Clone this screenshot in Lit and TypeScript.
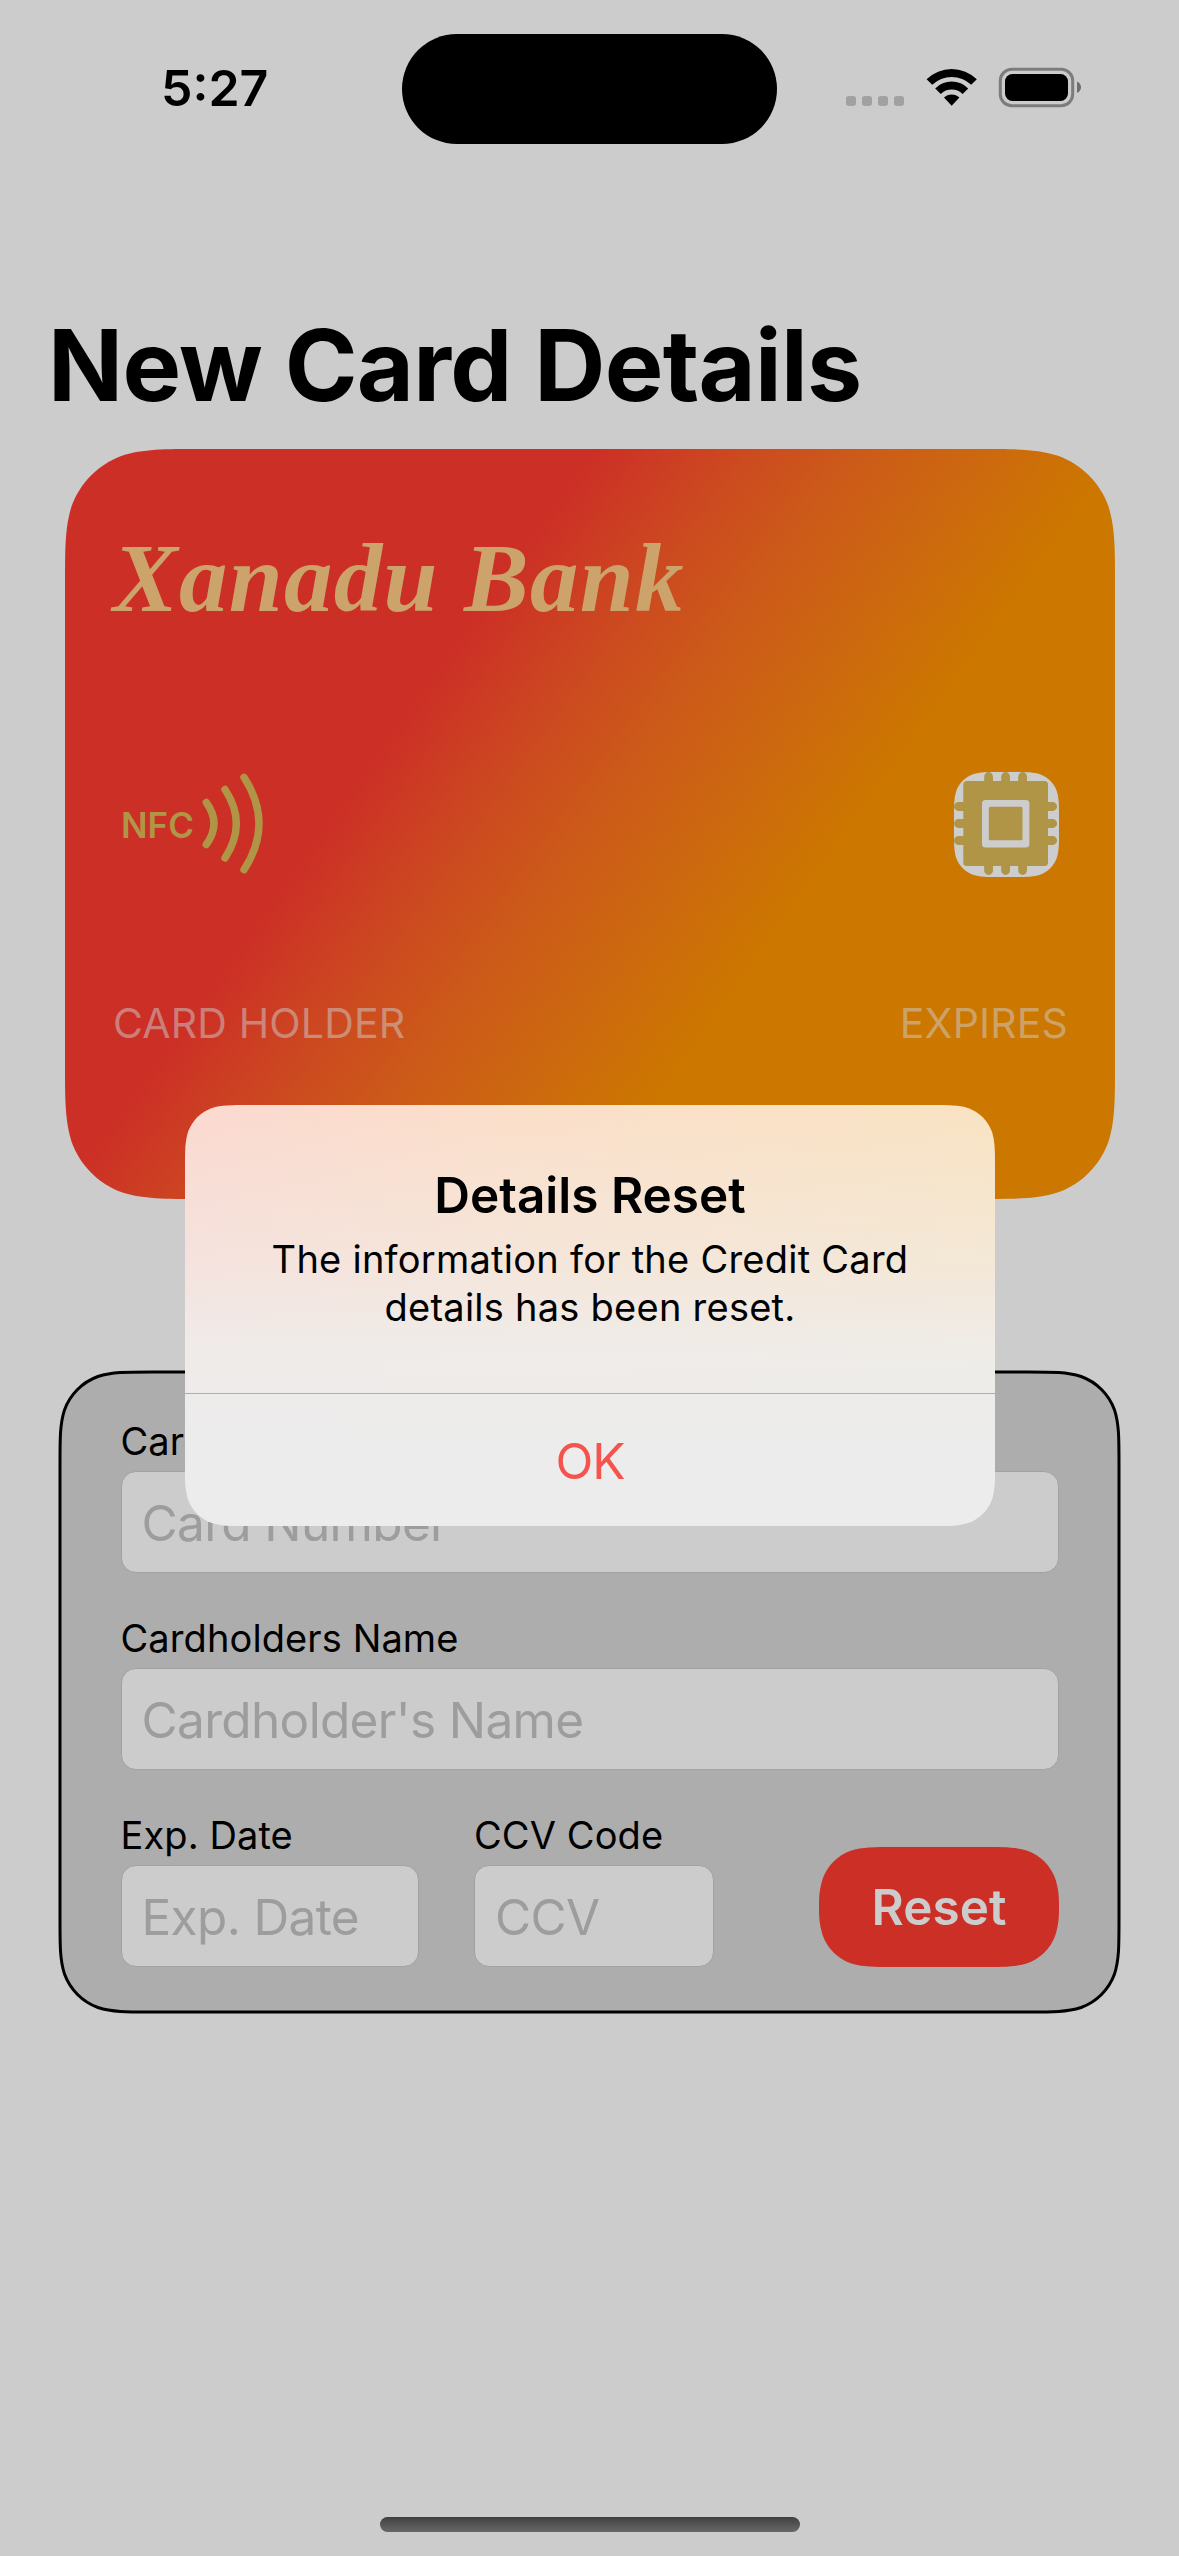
import { LitElement, html, svg, css, unsafeCSS } from "lit";
import { customElement, property } from "lit/decorators.js";

/** Outline of a rectangle with continuous-curvature corners. */
function squircle(w: number, h: number, r: number, o = 0): string {
  const a = 1.528665, b = 1.088493, c = 0.868407, d = 0.631494, e = 0.074911, f = 0.372824, g = 0.16906;
  const ay = Math.min(a, h / 2 / r);
  const by = Math.min(b, (ay + c) / 2);
  const X = (k: number) => (o + k * r).toFixed(2);
  const XR = (k: number) => (o + w - k * r).toFixed(2);
  const Y = (k: number) => (o + k * r).toFixed(2);
  const YB = (k: number) => (o + h - k * r).toFixed(2);
  return [
    `M${X(a)} ${Y(0)}L${XR(a)} ${Y(0)}`,
    `C${XR(b)} ${Y(0)} ${XR(c)} ${Y(0)} ${XR(d)} ${Y(e)}`,
    `C${XR(f)} ${Y(g)} ${XR(g)} ${Y(f)} ${XR(e)} ${Y(d)}`,
    `C${XR(0)} ${Y(c)} ${XR(0)} ${Y(by)} ${XR(0)} ${Y(ay)}`,
    `L${XR(0)} ${YB(ay)}`,
    `C${XR(0)} ${YB(by)} ${XR(0)} ${YB(c)} ${XR(e)} ${YB(d)}`,
    `C${XR(g)} ${YB(f)} ${XR(f)} ${YB(g)} ${XR(d)} ${YB(e)}`,
    `C${XR(c)} ${YB(0)} ${XR(b)} ${YB(0)} ${XR(a)} ${YB(0)}`,
    `L${X(a)} ${YB(0)}`,
    `C${X(b)} ${YB(0)} ${X(c)} ${YB(0)} ${X(d)} ${YB(e)}`,
    `C${X(f)} ${YB(g)} ${X(g)} ${YB(f)} ${X(e)} ${YB(d)}`,
    `C${X(0)} ${YB(c)} ${X(0)} ${YB(by)} ${X(0)} ${YB(ay)}`,
    `L${X(0)} ${Y(ay)}`,
    `C${X(0)} ${Y(by)} ${X(0)} ${Y(c)} ${X(e)} ${Y(d)}`,
    `C${X(g)} ${Y(f)} ${X(f)} ${Y(g)} ${X(d)} ${Y(e)}`,
    `C${X(c)} ${Y(0)} ${X(b)} ${Y(0)} ${X(a)} ${Y(0)}Z`,
  ].join("");
}

const clip = (w: number, h: number, r: number) => unsafeCSS(`path("${squircle(w, h, r)}")`);

@customElement("status-bar")
class StatusBar extends LitElement {
  static styles = css`
    :host { display: grid; grid-template-columns: 402px 375px 402px; height: 271px; padding-top: 34px; box-sizing: border-box; align-items: start; }
    .time { padding-left: 161px; font-size: 50px; font-weight: 600; line-height: 108px; }
    .island { height: 110px; border-radius: 55px; background: #000; }
    .icons { display: block; margin: 26px 0 0 61px; }
  `;
  render() {
    return html`
      <div class="time">5:27</div>
      <div class="island"></div>
      <svg class="icons" width="260" height="60" viewBox="838 60 260 60">
        ${[846, 862, 878, 894].map((x) => svg`<rect x=${x} y="96" width="10" height="10" rx="3" fill="#a1a1a1" />`)}
        <path d="M926.6 79.2A36 36 0 0 1 976.8 79.2L971.2 84.8A28 28 0 0 0 932.2 84.8Z" />
        <path d="M935.2 88.4A23.4 23.4 0 0 1 968.2 88.4L962.6 94A15.5 15.5 0 0 0 940.8 94Z" />
        <path d="M944 97.6A11 11 0 0 1 959.4 97.6L951.7 105.8Z" />
        <rect x="1000.3" y="69.3" width="72.4" height="36.4" rx="11.5" fill="none" stroke="#7c7c7c" stroke-width="3" />
        <rect x="1005" y="74" width="63" height="27" rx="7.5" />
        <path d="M1077 81.5Q1081 83.5 1081 87.3T1077 93Z" fill="#6e6e6e" />
      </svg>
    `;
  }
}

@customElement("credit-card")
class CreditCard extends LitElement {
  static styles = css`
    :host {
      display: flex; flex-direction: column; box-sizing: border-box; width: 1050px; height: 750px; padding: 70px 47px 0 48px;
      background: linear-gradient(125.54deg, #cc2f26 33.33%, #cc4721 41.67%, #cc5a19 50%, #cc690f 58.33%, #cc7700 66.67%);
      clip-path: ${clip(1050, 750, 90)};
    }
    .bank { font: italic 700 97px/120px "Liberation Serif", serif; letter-spacing: 1.25px; color: #cba36b; white-space: nowrap; }
    .row { display: flex; justify-content: space-between; align-items: center; }
    .icons { margin: 133px 9px 0 8px; height: 105px; }
    .nfc { display: flex; align-items: center; color: #b09546; font-size: 35px; font-weight: 600; }
    .waves { margin-left: 8px; }
    .chip { display: block; }
    .labels { margin-top: 116px; font-size: 41px; line-height: 60px; letter-spacing: 0.15px; color: rgba(205, 205, 205, 0.5); }
  `;
  render() {
    return html`
      <div class="bank">Xanadu Bank</div>
      <div class="row icons">
        <div class="nfc">
          <span>NFC</span>
          <svg class="waves" width="64" height="105" viewBox="202 772 64 105" fill="none" stroke="#b09546" stroke-width="7.4" stroke-linecap="round">
            <path d="M206.3 802.5Q221.7 823.5 206.3 844.5" />
            <path d="M225 789.5Q247.6 823.5 225 858" />
            <path d="M244 777.3Q274 823.5 244 869.7" />
          </svg>
        </div>
        <svg class="chip" width="105" height="105" viewBox="34 32 105 105">
          <path d=${squircle(105, 105, 30)} transform="translate(34 32)" fill="#cdcdcd" />
          <rect x="43.3" y="41" width="84.7" height="85" rx="3.5" fill="#b09546" />
          <path d="M68.6 36.5V130.5M85.6 36.5V130.5M102.6 36.5V130.5M38.4 66.5H132.7M38.4 83.5H132.7M38.4 100.5H132.7" stroke="#b09546" stroke-width="8.8" stroke-linecap="round" />
          <rect x="62" y="60" width="47.4" height="47.4" rx="3.5" fill="#cdcdcd" />
          <rect x="68.8" y="66.8" width="33.7" height="33.5" rx="1.5" fill="#b09546" />
        </svg>
      </div>
      <div class="row labels"><span>CARD HOLDER</span><span>EXPIRES</span></div>
    `;
  }
}

@customElement("form-field")
class FormField extends LitElement {
  @property() label = "";
  @property() placeholder = "";
  static styles = css`
    :host { display: block; }
    .label { font-size: 38px; line-height: 60px; letter-spacing: 0.1px; color: #000; white-space: nowrap; }
    .box { box-sizing: border-box; height: 102px; margin-bottom: -1px; padding: 2px 0 0 20px; border: 1px solid #a2a2a2; border-radius: 15px; background: #ccc; font-size: 49.5px; line-height: 98px; letter-spacing: -0.65px; color: #9d9d9d; white-space: nowrap; }
  `;
  render() {
    return html`<div class="label">${this.label}</div><div class="box">${this.placeholder}</div>`;
  }
}

@customElement("card-form")
class CardForm extends LitElement {
  static styles = css`
    :host { display: grid; box-sizing: border-box; width: 1059px; height: 640px; }
    .frame, .content { grid-area: 1 / 1; }
    .frame { display: block; margin: -2px; }
    .content { display: flex; flex-direction: column; gap: 36px; padding: 39px 60px 0 60.5px; }
    .row { display: flex; align-items: flex-end; }
    .exp { width: 298.5px; margin-right: 55px; }
    .ccv { width: 240px; }
    .reset { width: 240px; height: 120px; margin: 0 0 -1px auto; background: #cc2f26; clip-path: ${clip(240, 120, 50)}; color: #ccc; font-size: 49.5px; font-weight: 600; line-height: 120px; text-align: center; }
  `;
  render() {
    return html`
      <svg class="frame" width="1063" height="644"><path d=${squircle(1059, 640, 60, 2)} fill="#adadad" stroke="#000" stroke-width="3" /></svg>
      <div class="content">
        <form-field label="Card Number" placeholder="Card Number"></form-field>
        <form-field label="Cardholders Name" placeholder="Cardholder's Name"></form-field>
        <div class="row">
          <form-field class="exp" label="Exp. Date" placeholder="Exp. Date"></form-field>
          <form-field class="ccv" label="CCV Code" placeholder="CCV"></form-field>
          <div class="reset">Reset</div>
        </div>
      </div>
    `;
  }
}

@customElement("alert-dialog")
class AlertDialog extends LitElement {
  static styles = css`
    :host {
      display: flex; flex-direction: column; box-sizing: border-box; width: 810px; height: 421px; text-align: center; color: #000;
      background:
        linear-gradient(to bottom, rgba(236, 236, 236, 0) 0%, rgba(238, 237, 236, 0.5) 38%, rgba(238, 237, 236, 0.9) 58%, #ececec 82%),
        linear-gradient(to right, #fbd9d0, #fbdfc9 42%, #f9e3c2);
      clip-path: ${clip(810, 421, 42)};
    }
    .body { height: 289px; box-sizing: border-box; padding-top: 60px; border-bottom: 1px solid #adadad; }
    .title { font-size: 49.5px; font-weight: 600; line-height: 60px; }
    .message { margin-top: 10px; font-size: 38px; line-height: 48px; letter-spacing: 0.25px; }
    .ok { margin-top: 37px; font-size: 49.5px; line-height: 60px; letter-spacing: -1px; color: #f5544e; }
  `;
  render() {
    return html`
      <div class="body">
        <div class="title">Details Reset</div>
        <div class="message">The information for the Credit Card<br />details has been reset.</div>
      </div>
      <div class="ok">OK</div>
    `;
  }
}

@customElement("app-root")
class AppRoot extends LitElement {
  static styles = css`
    :host { position: relative; display: flex; flex-direction: column; width: 1179px; height: 2556px; overflow: hidden; background: #ccc; font-family: Inter, "Liberation Sans", sans-serif; color: #000; }
    h1 { margin: 35px 0 23px 48px; font-size: 98.5px; font-weight: 700; line-height: 120px; letter-spacing: -0.7px; white-space: nowrap; }
    credit-card { margin-left: 65px; }
    card-form { margin: 173px 0 0 60px; }
    alert-dialog { position: absolute; left: 185px; top: 1105px; }
    .home { width: 420px; height: 15px; margin: auto 0 24px 380px; border-radius: 7.5px; background: linear-gradient(#404040, #686868); }
  `;
  render() {
    return html`
      <status-bar></status-bar>
      <h1>New Card Details</h1>
      <credit-card></credit-card>
      <card-form></card-form>
      <alert-dialog></alert-dialog>
      <div class="home"></div>
    `;
  }
}
